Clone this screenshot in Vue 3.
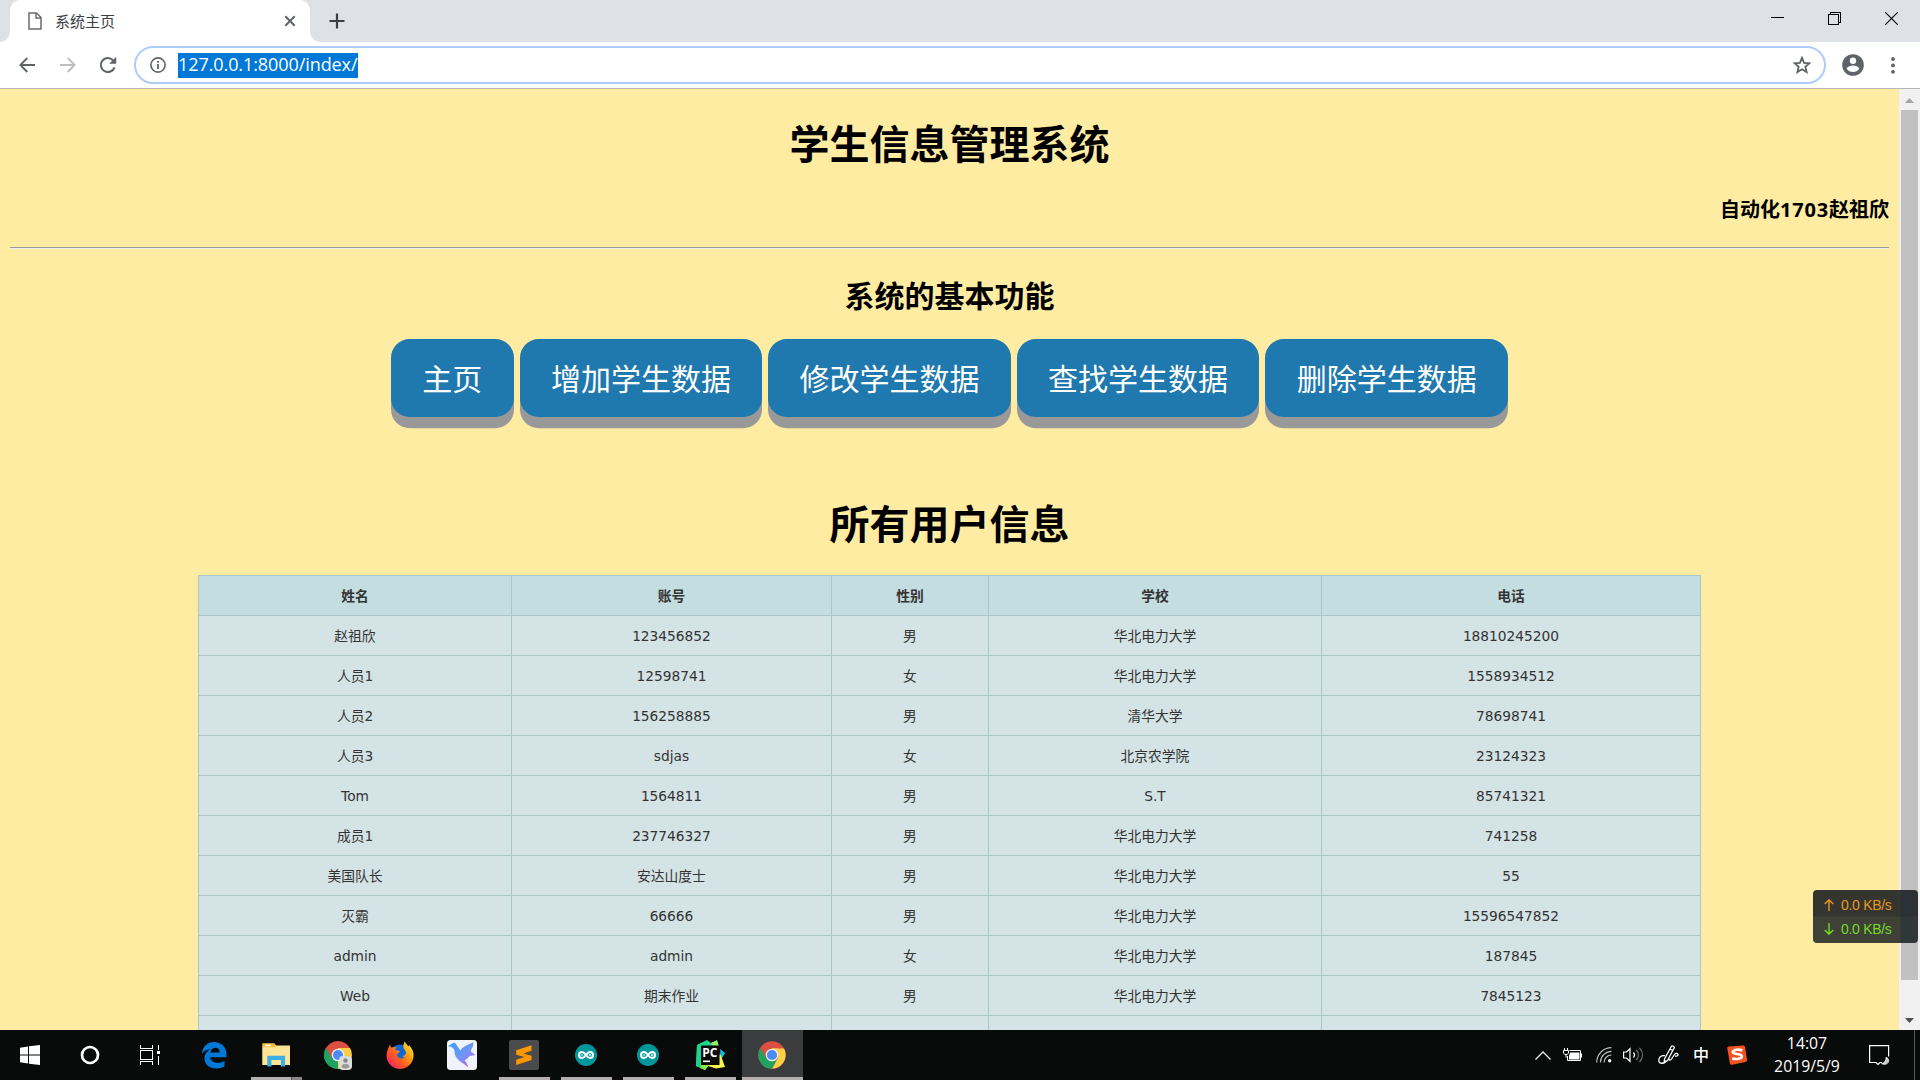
<script setup>
const actions = ['主页', '增加学生数据', '修改学生数据', '查找学生数据', '删除学生数据']
const columns = [
  { label: '姓名', width: 313 },
  { label: '账号', width: 320 },
  { label: '性别', width: 157 },
  { label: '学校', width: 333 },
  { label: '电话', width: 379 },
]
const users = [
  ['赵祖欣', '123456852', '男', '华北电力大学', '18810245200'],
  ['人员1', '12598741', '女', '华北电力大学', '1558934512'],
  ['人员2', '156258885', '男', '清华大学', '78698741'],
  ['人员3', 'sdjas', '女', '北京农学院', '23124323'],
  ['Tom', '1564811', '男', 'S.T', '85741321'],
  ['成员1', '237746327', '男', '华北电力大学', '741258'],
  ['美国队长', '安达山度士', '男', '华北电力大学', '55'],
  ['灭霸', '66666', '男', '华北电力大学', '15596547852'],
  ['admin', 'admin', '女', '华北电力大学', '187845'],
  ['Web', '期末作业', '男', '华北电力大学', '7845123'],
  ['', '', '', '', ''],
]
</script>

<template>
  <div class="screen">
    <header class="tabstrip">
      <div class="tab">
        <svg class="file" width="14" height="18" viewBox="0 0 14 18" fill="none" stroke="#6b6b6b" stroke-width="1.5">
          <path d="M1 1h7.500l4.500 4.500V17H1z" /><path d="M8 1v5h5" />
        </svg>
        <span class="tab-title">系统主页</span>
        <svg class="tab-close" width="12" height="12" viewBox="0 0 12 12" stroke="#5f6368" stroke-width="2"><path d="M1.300 1.300l9.400 9.400M10.700 1.300l-9.400 9.400" /></svg>
      </div>
      <svg class="plus" width="16" height="16" viewBox="0 0 16 16" stroke="#3c4043" stroke-width="2.200"><path d="M8 .5v15M.5 8h15" /></svg>
      <div class="window-buttons">
        <svg width="13" height="13" viewBox="0 0 13 13" shape-rendering="crispEdges"><path d="M0 5h13v1H0z" /></svg>
        <svg width="13" height="13" viewBox="0 0 13 13" fill="none" stroke="#000" shape-rendering="crispEdges"><path d="M.5 2.500h10v10H.5zM2.500 2.500v-2h10v10h-2" /></svg>
        <svg width="13" height="13" viewBox="0 0 13 13" stroke="#000" stroke-width="1.100"><path d="M.3.3l12.400 12.400M12.700.3L.3 12.700" /></svg>
      </div>
    </header>

    <div class="toolbar">
      <svg class="nav back" width="16" height="16" viewBox="0 0 16 16" fill="none" stroke="#5f6368" stroke-width="1.900"><path d="M16 8H1.500M8.300 1L1.400 8l6.900 7" /></svg>
      <svg class="nav fwd" width="16" height="16" viewBox="0 0 16 16" fill="none" stroke="#bdbfc1" stroke-width="1.900"><path d="M0 8h14.500M7.700 1l6.900 7-6.900 7" /></svg>
      <svg class="nav reload" width="18" height="18" viewBox="0 0 18 18" fill="none" stroke="#5f6368" stroke-width="2"><path d="M15.500 11.300A7 7 0 1 1 14 4.200" /><path d="M17.200.8v7h-7z" fill="#5f6368" stroke="none" /></svg>
      <div class="omnibox">
        <svg class="info" width="16" height="16" viewBox="0 0 16 16" fill="none" stroke="#5f6368" stroke-width="1.600"><circle cx="8" cy="8" r="7.100" /><path d="M8 7v5M8 4v1.700" stroke-width="1.800" /></svg>
        <span class="url"><span class="url-text">127.0.0.1:8000/index/</span></span>
        <svg class="star" width="18" height="18" viewBox="0 0 18 18" fill="none" stroke="#5f6368" stroke-width="1.800"><path d="M9 1.900l2.050 4.950 5.350.45-4.050 3.500 1.250 5.250L9 13.250l-4.600 2.800 1.250-5.250L1.600 7.300l5.350-.45z" /></svg>
      </div>
      <svg class="avatar" width="22" height="22" viewBox="0 0 22 22"><circle cx="11" cy="11" r="10.800" fill="#5f6368" /><circle cx="11" cy="6.700" r="3.200" fill="#fff" /><path d="M4.500 14.500c1.200-2 4-3.100 6.500-3.100s5.300 1.100 6.500 3.100c-1.500 2.300-3.900 3.600-6.500 3.600s-5-1.300-6.500-3.600z" fill="#fff" /></svg>
      <svg class="kebab" width="4" height="17" viewBox="0 0 4 17" fill="#5f6368"><circle cx="2" cy="2" r="1.900" /><circle cx="2" cy="8.400" r="1.900" /><circle cx="2" cy="14.800" r="1.900" /></svg>
    </div>

    <div class="viewport">
      <main class="page">
        <h1 class="title">学生信息管理系统</h1>
        <p class="author">自动化<span class="num">1703</span>赵祖欣</p>
        <div class="rule"></div>
        <h2 class="subtitle">系统的基本功能</h2>
        <nav class="actions">
          <a v-for="a in actions" :key="a" class="action">{{ a }}</a>
        </nav>
        <h1 class="list-title">所有用户信息</h1>
        <table class="users">
          <colgroup><col v-for="c in columns" :key="c.label" :style="{ width: c.width + 'px' }" /></colgroup>
          <thead><tr><th v-for="c in columns" :key="c.label">{{ c.label }}</th></tr></thead>
          <tbody>
            <tr v-for="(u, i) in users" :key="i"><td v-for="(v, j) in u" :key="j">{{ v }}</td></tr>
          </tbody>
        </table>
      </main>
      <div class="scrollbar">
        <svg class="sb-up" width="9" height="5" viewBox="0 0 9 5"><path d="M0 5L4.500 0 9 5z" fill="#a3a3a3" /></svg>
        <div class="thumb"></div>
        <svg class="sb-down" width="9" height="5" viewBox="0 0 9 5"><path d="M0 0h9L4.500 5z" fill="#505050" /></svg>
      </div>
    </div>

    <footer class="taskbar">
      <div class="start">
        <div class="sys"><svg width="20" height="20" viewBox="0 0 20 20" fill="#fff"><path d="M0 2.700L8 1.500v8H0zM9 1.300L20 0v9.500H9zM0 10.500h8v8l-8-1.200zM9 10.500h11V20L9 18.700z" /></svg></div>
        <div class="sys"><svg width="20" height="20" viewBox="0 0 20 20" fill="none" stroke="#fff" stroke-width="2.700"><circle cx="10" cy="10" r="8" /></svg></div>
        <div class="sys"><svg width="20" height="20" viewBox="0 0 20 20" fill="none" stroke="#fff" shape-rendering="crispEdges"><path d="M.5 0v3.500h12V0M.5 5.500h12v9H.5zM.5 20v-3.500h12V20M18.500 0v5M18.500 11v9" /><path d="M17 6h3v3h-3z" fill="#fff" stroke="none" /></svg></div>
      </div>
      <div class="apps">
        <div class="app">
          <svg width="26" height="28" viewBox="0 0 26 28"><path d="M1 12.500C1.500 5.500 6.500 1 13 1c7.500 0 12.500 5.200 12.500 12.300v3H9.200c.3 3.700 3.500 5.500 7.300 5.500 2.600 0 5-.7 7-1.900v5.500c-2.400 1.300-5.300 2-8.300 2C8.300 27.400 3.500 23.500 3.500 17.500c0-4.500 2.500-7.800 6.200-9.600C6 8.300 3 9.700 1 12.500zM9.400 11.500h9.200c0-3-1.400-4.800-4.100-4.800-2.600 0-4.600 1.900-5.100 4.800z" fill="#0078d7" /></svg>
        </div>
        <div class="app running split">
          <svg width="28" height="24" viewBox="0 0 28 24"><path d="M.5.500h12l1.500 2H28V22H.5z" fill="#fce38c" /><path d="M.5.5h12l1.200 3.700H.5z" fill="#f7bd2b" /><path d="M3 1.700h6v1.500H3z" fill="#fff" /><path d="M.5 4.500H28V22H.5z" fill="#ffe597" /><path d="M5.300 23.500V12.700h17.800v10.800h-4.200V17h-9.400v6.500z" fill="#3cb0e5" /></svg>
        </div>
        <div class="app">
          <svg width="28" height="30" viewBox="0 0 28 30"><path d="M14 15L1.900 8A14 14 0 0 1 26.100 8z" fill="#dd4f43" /><path d="M14 15L1.900 8A14 14 0 0 0 14 29z" fill="#1ea362" /><path d="M14 15V8h12.100A14 14 0 0 1 14 29z" fill="#ffce45" /><path d="M1.900 8H14v7l-6 3.500z" fill="#dd4f43" /><path d="M1.900 8l6.100 10.500L14 22v7A14 14 0 0 1 1.900 8z" fill="#1ea362" /><circle cx="14" cy="15" r="6.300" fill="#f1f1f1" /><circle cx="14" cy="15" r="5" fill="#4c8bf5" /><rect x="15" y="16" width="13" height="14" rx="4" fill="#dcdcdc" /><circle cx="21.500" cy="20.500" r="2.200" fill="#888" /><ellipse cx="21.500" cy="26.300" rx="3.700" ry="2.200" fill="#999" /></svg>
        </div>
        <div class="app">
          <svg width="28" height="28" viewBox="0 0 28 28">
            <defs><linearGradient id="fx" x1="1" y1="0" x2="0" y2="1"><stop offset="0" stop-color="#fff44f" /><stop offset=".3" stop-color="#ffb115" /><stop offset=".6" stop-color="#ff5a1f" /><stop offset="1" stop-color="#e3127e" /></linearGradient></defs>
            <circle cx="14" cy="13" r="9.500" fill="#1268cf" />
            <path d="M4 3.500l1 3 5-.5c0 1-.5 2-1.200 2.500 1 1 2.700 1.200 5 1.500-.3 2-2.300 2.200-3 3.500.5 4 5 5.500 8 2.500-1 0-2-.3-2.500-.8 4-.7 4.500-4 2.500-6.200-2-2-2-5 0-8.500 1 2.500 3 4 4 5l.3-1.500C26 7.500 28 11 27.600 15 27 22.500 21 28 14 28S.5 22.500.5 14.500C.5 10 2.500 7 4 3.500z" fill="url(#fx)" />
          </svg>
        </div>
        <div class="app">
          <svg width="30" height="30" viewBox="0 0 30 30"><defs><linearGradient id="bd" x1="0" y1="0" x2="1" y2="1"><stop offset="0" stop-color="#38a5f5" /><stop offset=".55" stop-color="#7494f7" /><stop offset="1" stop-color="#d355ed" /></linearGradient></defs><rect width="30" height="30" rx="3.500" fill="#f1f3fb" /><path d="M1 6.500C2.500 4.500 4 4.700 5 3.500c2-1.500 4-.3 4.600 1.500l3.700 5.500C16 6.500 21 4.500 26.500 2.300c0 3-.6 5-2.300 7.200l-.4 2 4.700 3.500-6 1c-1.500 2.200-3 3.300-4.800 4.300 1.500 2 3 4.300 3.600 7.200-3.300-3.200-6.300-4.500-9.300-7C9.500 18 7.300 15.200 7.500 11.500 7.500 8.500 5 6.500 1 6.500z" fill="url(#bd)" /></svg>
        </div>
        <div class="app running">
          <svg width="30" height="30" viewBox="0 0 30 30"><rect width="30" height="30" rx="2" fill="#4b4b4b" /><path d="M7.200 10.200l15.300-5v5.500l-8 2.700 8 2.300V20L7.200 25v-5.300l8.200-2.600-8.200-2.400z" fill="#ff9800" /></svg>
        </div>
        <div v-for="n in 2" :key="n" class="app running">
          <svg class="arduino" width="24" height="24" viewBox="0 0 24 24" fill="none"><circle cx="12" cy="12" r="11" fill="#00979c" /><path d="M12 12c-1.500-2.200-2.500-3-4-3a3 3 0 0 0 0 6c1.500 0 2.500-.8 4-3s2.500-3 4-3a3 3 0 0 1 0 6c-1.500 0-2.500-.8-4-3z" stroke="#fff" stroke-width="2" /><path d="M6.800 12h2.400M14.800 12h2.400M16 10.800v2.400" stroke="#fff" stroke-width=".9" /></svg>
        </div>
        <div class="app running">
          <svg width="30" height="30" viewBox="0 0 30 30"><path d="M2 5L12 0l4 3 6-2.700 2 6.700L16 22 10 30l-9-4z" fill="#21d789" /><path d="M16 3l6-2.700L24 7l-3 3z" fill="#9df05b" /><path d="M25 9l5 4-4 7z" fill="#08c5e8" /><path d="M25 13l5 14-9 1.500L13 26l-4 3.500L7 24l16-6z" fill="#f8f54a" /><path d="M2 5l5-2.500V25l4 4.500L1 26z" fill="#1fd38c" /><path d="M7 24l7 1-4 5-5-2z" fill="#8ce84b" /><rect x="6" y="5.500" width="18.500" height="19.500" fill="#0b0b0b" /><path d="M8 20.500h7v1.600H8z" fill="#fff" /><text x="7.200" y="16.500" class="pc">PC</text></svg>
        </div>
        <div class="app active">
          <svg width="28" height="28" viewBox="0 0 28 28"><circle cx="14" cy="14" r="13.700" fill="#dd4f43" /><path d="M14 7.500h12A13.700 13.700 0 0 1 14 27.700L19.700 17z" fill="#ffce45" /><path d="M2.300 7A13.700 13.700 0 0 0 14 27.700L19.700 17 14 20.500 8.200 17z" fill="#1ea362" /><path d="M14 7.500h6l-.2 9.500z" fill="#ffce45" /><circle cx="14" cy="14" r="6.300" fill="#f1f1f1" /><circle cx="14" cy="14" r="5.100" fill="#4c8bf5" /></svg>
        </div>
      </div>
      <div class="tray">
        <svg width="16" height="9" viewBox="0 0 16 9" fill="none" stroke="#eee" stroke-width="1.300"><path d="M.5 8.500L8 1l7.500 7.500" /></svg>
        <svg class="battery" width="20" height="14" viewBox="0 0 20 14" fill="none" stroke="#fff"><path d="M6.500 2.500h11v10h-13V8M18.500 5.500v4" /><path d="M7 4.500h9.500v7H6V8z" fill="#fff" stroke="none" /><path d="M1.500 0v2.500M4.500 0v2.500M.5 2.500h5v2.700L4 6.500H2L.5 5.200zM3 6.500v3" /></svg>
        <svg class="wifi" width="16" height="16" viewBox="0 0 16 16" fill="none" stroke="#bbb" stroke-width="1.200"><path d="M.7 15.500C.7 7.300 7.300.7 15.500.7M4.400 15.500c0-6.100 5-11.100 11.100-11.100M8 15.500c0-4.100 3.400-7.500 7.500-7.500" /><circle cx="13.700" cy="13.700" r="1.700" fill="#fff" stroke="none" /></svg>
        <svg class="sound" width="21" height="16" viewBox="0 0 21 16" fill="none" stroke="#fff" stroke-width="1.200"><path d="M.6 5h2.900L7 1.700v12.600L3.500 11H.6z" /><path d="M10.500 5.500c1.300 1.500 1.300 3.500 0 5" /><path d="M13.300 3c2.700 3 2.700 7 0 10M16.500.8c3.900 4.400 3.900 10 0 14.400" stroke="#777" /></svg>
        <svg class="pen" width="21" height="20" viewBox="0 0 21 20" fill="none" stroke="#fff" stroke-width="1.300"><path d="M6.500 14L13.300 1.500c.8-1.300 3.500.2 2.800 1.500L9.500 15.500l-3.300 2zM12 4l2.700 1.500" /><path d="M7 10.700C3.500 10 .8 12 .8 15c0 4.500 6 4 7.200.5M11 13.500c-.5 2 1.500 2 2.500.5l3-4.500c1-1.500 3.500-1.500 3.500.2 0 1.300-1.500 1.500-3 1.500" /></svg>
        <span class="ime">中</span>
        <svg class="sogou" width="20" height="20" viewBox="0 0 20 20"><path d="M1.800 1.600L16 .4c1-.1 1.800.5 2 1.500l2 12.800c.2 1.100-.4 1.900-1.500 2.200L5.200 19.700c-1 .2-2-.3-2.300-1.300L.3 3.500C.1 2.400.7 1.700 1.800 1.600z" fill="#f4511e" /><path d="M15.300 5.500C12 4 6 4.400 5.700 7c-.2 2.500 9 1.300 9.100 4.200.1 2.700-5.800 3.500-9.600 2" fill="none" stroke="#fff" stroke-width="2.600" /></svg>
        <div class="clock"><span>14:07</span><span>2019/5/9</span></div>
        <svg class="notice" width="21" height="21" viewBox="0 0 21 21" fill="none" stroke="#fff" stroke-width="1.200"><path d="M13 17.500H11l-2 2-2-2H.6V.6h19v11" /><path d="M17 12.300c.4 3.200-1.300 5.500-4.400 6.300 3.200 1.800 6.900.2 7.100-3 0-1.400-1-2.700-2.700-3.300z" fill="#ccc" stroke-width=".8" /></svg>
        <div class="peek"></div>
      </div>
    </footer>

    <aside class="netspeed">
      <div class="net up"><svg width="10" height="12" viewBox="0 0 10 12" fill="none" stroke="currentColor" stroke-width="1.400"><path d="M5 12V1M.7 5L5 .9 9.300 5" /></svg><span>0.0 KB/s</span></div>
      <div class="net down"><svg width="10" height="12" viewBox="0 0 10 12" fill="none" stroke="currentColor" stroke-width="1.400"><path d="M5 0v11M.7 7L5 11.100 9.300 7" /></svg><span>0.0 KB/s</span></div>
    </aside>
  </div>
</template>

<style>
body { margin: 0; overflow: hidden; }
</style>

<style scoped>
* { box-sizing: border-box; }
svg { display: block; flex: none; }
.screen { position: relative; width: 1920px; height: 1080px; display: flex; flex-direction: column; overflow: hidden; font-family: "Open Sans", "Noto Sans CJK SC", sans-serif; }

.tabstrip { height: 42px; flex: none; display: flex; background: #dee1e6; }
.tab { position: relative; width: 300px; margin-left: 10px; display: flex; align-items: center; background: #fff; border-radius: 10px 10px 0 0; }
.tab::before, .tab::after { content: ""; position: absolute; bottom: 0; width: 10px; height: 10px; }
.tab::before { left: -10px; background: radial-gradient(circle at 0 0, transparent 9.5px, #fff 10px); }
.tab::after { right: -10px; background: radial-gradient(circle at 100% 0, transparent 9.500px, #fff 10px); }
.file { margin-left: 18px; }
.tab-title { margin-left: 13px; font: 15px/20px "Noto Sans CJK SC", sans-serif; color: #3c4043; }
.tab-close { margin-left: auto; margin-right: 14px; }
.plus { margin: 13px 0 0 19px; }
.window-buttons { margin: 12px 22px 0 auto; display: flex; gap: 44px; }

.toolbar { height: 47px; flex: none; display: flex; align-items: center; background: #fff; border-bottom: 1px solid #b6b4b6; }
.back { margin-left: 19px; }
.fwd { margin-left: 25px; }
.reload { margin-left: 23px; }
.omnibox { width: 1692px; height: 38px; margin-left: 17px; display: flex; align-items: center; border: 2.500px solid #aecbfa; border-radius: 19px; }
.info { margin-left: 14px; }
.url { margin-left: 12px; width: 180px; height: 25px; background: #0078d7; color: #fff; font: 18px/23px "Open Sans", sans-serif; white-space: nowrap; }
.url-text { letter-spacing: -0.08px; }
.star { margin-left: auto; margin-right: 13px; }
.avatar { margin-left: 16px; }
.kebab { margin-left: 27px; }

.viewport { height: 941px; flex: none; display: flex; background: #ffeca3; overflow: hidden; }
.page { width: 1899px; padding: 0 10px; font-family: "Noto Sans CJK SC", sans-serif; color: #000; text-align: center; }
.title, .list-title { margin: 0; font-size: 40px; line-height: 52px; font-weight: 700; }
.title { margin-top: 27px; }
.author { margin: 28px 0 0; font-size: 20px; line-height: 26px; font-weight: 700; text-align: right; }
.num { font-family: "Open Sans", sans-serif; letter-spacing: 0.8px; }
.rule { margin-top: 24px; height: 2px; border-top: 1px solid #9a9a9a; border-bottom: 1px solid #eee; }
.subtitle { margin: 25px 0 0; font-size: 30px; line-height: 40px; font-weight: 700; }
.actions { margin-top: 25px; display: flex; justify-content: center; gap: 6.100px; }
.action { height: 78px; padding: 0 31.250px; border-radius: 18.750px; background: #1f78ae; color: #fff; font-size: 30px; line-height: 76px; box-shadow: 0 11.250px #999; }
.list-title { margin-top: 79px; }
.users { margin: 27px 0 0 188px; width: 1503px; table-layout: fixed; border-collapse: separate; border-spacing: 0; border-top: 1px solid #a9c6c9; border-left: 1px solid #a9c6c9; font: 13.750px/20px "DejaVu Sans", "Noto Sans CJK SC", sans-serif; color: #333; }
.users th, .users td { height: 40px; padding: 0; line-height: 20px; border-right: 1px solid #a9c6c9; border-bottom: 1px solid #a9c6c9; background: #d4e3e5; text-align: center; vertical-align: middle; }
.users th { background: #c3dde0; }

.scrollbar { width: 21px; display: flex; flex-direction: column; align-items: center; background: #f1f1f1; }
.sb-up { margin-top: 9px; }
.thumb { width: 17px; height: 870px; margin-top: 7px; background: #c1c1c1; }
.sb-down { margin-top: 38px; }

.taskbar { height: 50px; flex: none; display: flex; background: #090a0a; }
.start { width: 184px; display: flex; }
.sys { width: 60px; display: flex; align-items: center; justify-content: center; }
.apps { display: flex; gap: 1px; }
.app { position: relative; width: 61px; padding-right: 1px; display: flex; align-items: center; justify-content: center; }
.arduino { margin-top: -1px; }
.running::after, .active::after { content: ""; position: absolute; left: 5px; bottom: 0; width: 51px; height: 3px; background: #b4aeae; }
.split::after { background: linear-gradient(90deg, #b4b0b0 0 40px, #555 40px 41px, #8b8787 41px); }
.active { background: #3b3c3d; }
.active::after { left: 0; width: 61px; }
.pc { font: 700 12px "Open Sans", sans-serif; fill: #fff; }

.tray { margin-left: auto; display: flex; align-items: center; }
.battery { margin-left: 12px; }
.wifi { margin-left: 13px; }
.sound { margin-left: 11px; }
.pen { margin-left: 14px; }
.ime { margin-left: 14px; width: 16px; margin-top: -2px; font: 500 16px/20px "Noto Sans CJK SC", sans-serif; color: #fff; }
.sogou { margin-left: 18px; }
.clock { width: 80px; margin-left: 20px; display: flex; flex-direction: column; align-items: center; font-size: 15.800px; line-height: 23px; color: #fff; }
.notice { margin-left: 22px; }
.peek { width: 1px; height: 50px; margin: 0 5px 0 24px; background: #5a5a5a; }

.netspeed { position: absolute; left: 1813px; top: 890px; width: 105px; height: 53px; border-radius: 4px; overflow: hidden; background: linear-gradient(90deg, rgba(255, 236, 163, 0) 0 87px, rgba(35, 45, 60, 0.5) 88px), linear-gradient(#34352f 0 26px, #3f4036 27px); }
.net { height: 24px; display: flex; align-items: center; padding-left: 11px; font: 14px/24px "Liberation Sans", sans-serif; }
.net span { margin-left: 7px; letter-spacing: -0.3px; }
.up { margin-top: 3px; color: #e8971e; }
.down { color: #72dc28; }
</style>
